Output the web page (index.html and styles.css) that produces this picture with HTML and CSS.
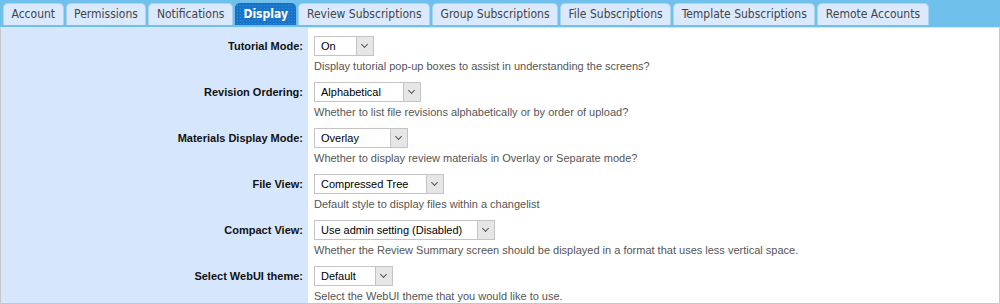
FILE: index.html
```html
<!DOCTYPE html>
<html lang="en">
<head>
    <meta charset="UTF-8">
    <title>Display Preferences</title>
    <link rel="stylesheet" href="styles.css">
</head>
<body>
    <div class="tabs">
        <div class="tab">Account</div>
        <div class="tab">Permissions</div>
        <div class="tab">Notifications</div>
        <div class="tab active">Display</div>
        <div class="tab">Review Subscriptions</div>
        <div class="tab">Group Subscriptions</div>
        <div class="tab">File Subscriptions</div>
        <div class="tab">Template Subscriptions</div>
        <div class="tab">Remote Accounts</div>
    </div>
    <div class="panel">
        <div class="row">
            <div class="label">Tutorial Mode:</div>
            <div class="field">
                <div class="select w-on"><span>On</span><i class="arrow"></i></div>
                <div class="desc">Display tutorial pop-up boxes to assist in understanding the screens?</div>
            </div>
        </div>
        <div class="row">
            <div class="label">Revision Ordering:</div>
            <div class="field">
                <div class="select w-alpha"><span>Alphabetical</span><i class="arrow"></i></div>
                <div class="desc">Whether to list file revisions alphabetically or by order of upload?</div>
            </div>
        </div>
        <div class="row">
            <div class="label">Materials Display Mode:</div>
            <div class="field">
                <div class="select w-overlay"><span>Overlay</span><i class="arrow"></i></div>
                <div class="desc">Whether to display review materials in Overlay or Separate mode?</div>
            </div>
        </div>
        <div class="row">
            <div class="label">File View:</div>
            <div class="field">
                <div class="select w-tree"><span>Compressed Tree</span><i class="arrow"></i></div>
                <div class="desc">Default style to display files within a changelist</div>
            </div>
        </div>
        <div class="row">
            <div class="label">Compact View:</div>
            <div class="field">
                <div class="select w-admin"><span>Use admin setting (Disabled)</span><i class="arrow"></i></div>
                <div class="desc">Whether the Review Summary screen should be displayed in a format that uses less vertical space.</div>
            </div>
        </div>
        <div class="row">
            <div class="label">Select WebUI theme:</div>
            <div class="field">
                <div class="select w-default"><span>Default</span><i class="arrow"></i></div>
                <div class="desc">Select the WebUI theme that you would like to use.</div>
            </div>
        </div>
    </div>
</body>
</html>
```
FILE: styles.css
```css
* {
    margin: 0;
    padding: 0;
    box-sizing: border-box;
}
body {
    width: 1000px;
    height: 304px;
    overflow: hidden;
    background: #fff;
    font-family: "Liberation Sans", Arial, sans-serif;
}
.tabs {
    display: flex;
    gap: 2px;
    height: 27px;
    padding: 3px 0 0 3px;
    background: #6fc1ec;
}
.tab {
    height: 22px;
    padding: 0 7.5px;
    line-height: 21px;
    font-family: "DejaVu Sans Condensed", "DejaVu Sans", sans-serif;
    font-size: 12px;
    color: #444;
    background: #dae9fd;
    border: 1px solid #a9d5f2;
    border-bottom: none;
    border-radius: 5px 5px 0 0;
    white-space: nowrap;
}
.tab.active {
    color: #fff;
    font-weight: bold;
    background-color: #1874c8;
    background-image: radial-gradient(#3589d6 0.6px, transparent 0.8px);
    background-size: 3px 3px;
    border-color: #1a6dba;
}
.panel {
    height: 277px;
    border-top: 1px solid #dde3ea;
    border-left: 1px solid #c8c8c8;
    border-right: 1px solid #c8c8c8;
    border-bottom: 1px solid #c8c8c8;
    background: linear-gradient(to right, #d6e7fd 307px, #fff 307px);
}
.row {
    display: flex;
    height: 46px;
    padding-top: 8px;
}
.label {
    width: 307px;
    height: 20px;
    padding-right: 5px;
    line-height: 20px;
    text-align: right;
    font-size: 11px;
    font-weight: bold;
    color: #111;
}
.field {
    padding-left: 6px;
}
.select {
    display: flex;
    height: 20px;
    border: 1px solid #c4c4c4;
    background: #fff;
    font-size: 11px;
    color: #000;
}
.select span {
    flex: 1;
    padding-left: 6px;
    line-height: 18px;
}
.arrow {
    position: relative;
    width: 17px;
    background: #e6e6e6;
    border-left: 1px solid #c4c4c4;
}
.arrow::after {
    content: "";
    position: absolute;
    left: 5px;
    top: 5px;
    width: 4px;
    height: 4px;
    border-right: 1px solid #555;
    border-bottom: 1px solid #555;
    transform: rotate(45deg);
}
.w-on { width: 60px; }
.w-alpha { width: 107px; }
.w-overlay { width: 94px; }
.w-tree { width: 130px; }
.w-admin { width: 181px; }
.w-default { width: 79px; }
.desc {
    height: 18px;
    line-height: 20px;
    font-size: 11px;
    color: #555;
}
```
